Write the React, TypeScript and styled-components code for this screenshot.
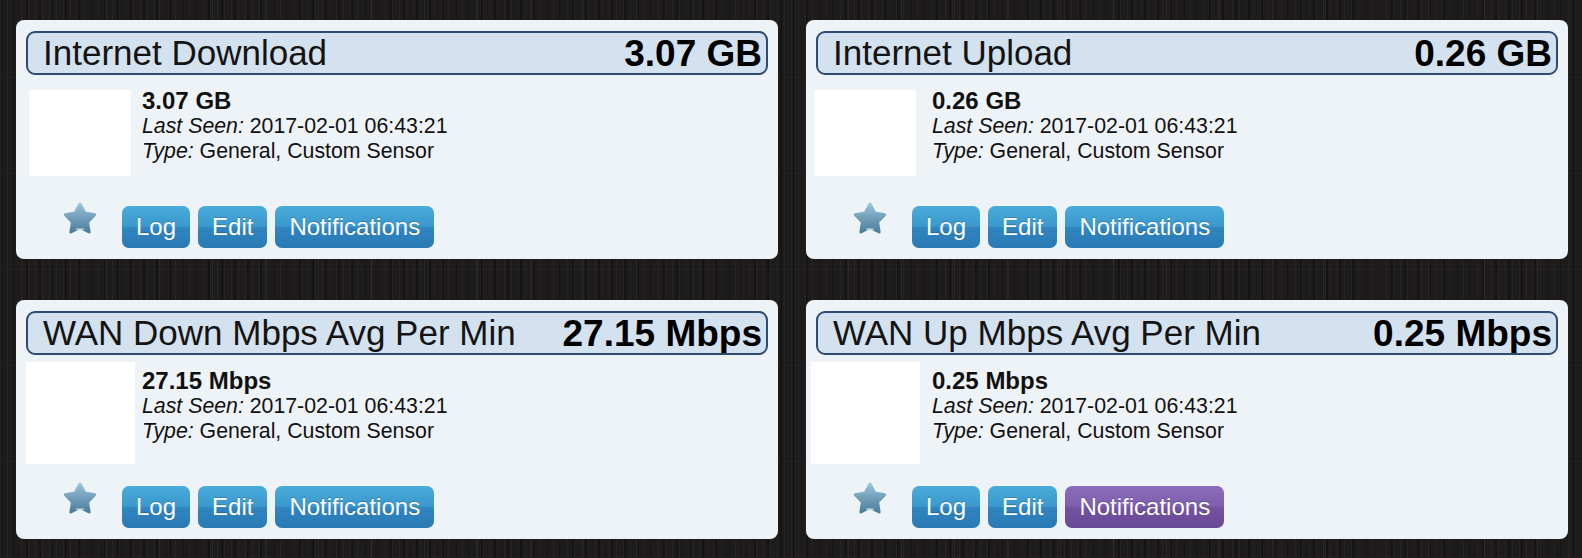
import React from "react";
import styled, { createGlobalStyle, css } from "styled-components";

const GlobalStyle = createGlobalStyle`
  html, body {
    margin: 0;
    padding: 0;
  }
  body {
    font-family: "Liberation Sans", Arial, Helvetica, sans-serif;
    background-color: #1d1b1c;
    background-image:
      repeating-linear-gradient(90deg, rgba(255,255,255,0.035) 0 1px, transparent 1px 7px),
      repeating-linear-gradient(90deg, rgba(0,0,0,0.28) 0 2px, transparent 2px 13px),
      repeating-linear-gradient(90deg, rgba(255,255,255,0.05) 0 1px, transparent 1px 53px),
      repeating-linear-gradient(0deg, rgba(255,255,255,0.025) 0 1px, transparent 1px 96px);
  }
`;

const Page = styled.div`
  display: grid;
  grid-template-columns: 762px 762px;
  column-gap: 28px;
  row-gap: 41px;
  padding: 20px 14px 19px 16px;
`;

const Card = styled.div`
  background: #eef3f8;
  border-radius: 8px;
  padding: 11px 10px 11px 10px;
  display: flex;
  flex-direction: column;
`;

const Header = styled.div`
  box-sizing: border-box;
  height: 44px;
  border: 2px solid #2c4d70;
  border-radius: 9px;
  background: #d4e2ef;
  display: flex;
  justify-content: space-between;
  align-items: flex-start;
  padding: 0 4px 0 15px;
  overflow: hidden;
`;

const Title = styled.div`
  font-size: 35px;
  line-height: 40px;
  color: #141414;
  white-space: nowrap;
`;

const HeaderValue = styled.div`
  font-size: 37px;
  line-height: 42px;
  font-weight: bold;
  color: #000;
  white-space: nowrap;
`;

const Body = styled.div`
  display: flex;
  margin-top: 7px;
  height: 102px;
`;

const ImageCol = styled.div`
  width: 108px;
  display: flex;
  align-items: center;
  justify-content: flex-start;
`;

const Placeholder = styled.div<{ $w: number; $h: number; $offset: number }>`
  background: #ffffff;
  width: ${(p) => p.$w}px;
  height: ${(p) => p.$h}px;
  margin-left: ${(p) => p.$offset}px;
  flex-shrink: 0;
`;

const Info = styled.div`
  margin-left: 8px;
  padding-top: 5px;
  color: #111;
`;

const ValueLine = styled.div`
  font-size: 24px;
  line-height: 27px;
  font-weight: bold;
`;

const MetaLine = styled.div`
  font-size: 21.3px;
  line-height: 25px;
  white-space: nowrap;
  em {
    font-style: italic;
  }
`;

const Footer = styled.div`
  display: flex;
  align-items: flex-start;
  margin-top: 22px;
  padding-left: 37px;
`;

const StarWrap = styled.div`
  width: 34px;
  height: 32px;
  margin-top: -4px;
  margin-right: 25px;
`;

const ButtonRow = styled.div`
  display: flex;
  gap: 8px;
`;

const blue = css`
  background: linear-gradient(180deg, #49acda 0%, #3b98cd 48%, #2f85c0 52%, #2a79b4 100%);
`;

const purple = css`
  background: linear-gradient(180deg, #8c6cba 0%, #7e5fae 48%, #72529f 52%, #6a4a98 100%);
`;

const Button = styled.button<{ $variant?: "blue" | "purple" }>`
  box-sizing: border-box;
  height: 42px;
  padding: 0 14px;
  border: none;
  border-radius: 7px;
  font-family: "Liberation Sans", Arial, Helvetica, sans-serif;
  font-size: 24px;
  line-height: 42px;
  color: #fff;
  text-shadow: 0 -1px 0 rgba(0, 0, 0, 0.2);
  cursor: pointer;
  ${(p) => (p.$variant === "purple" ? purple : blue)}
`;

const Star = () => (
  <svg width="34" height="32" viewBox="0 0 34 32">
    <defs>
      <linearGradient id="starGrad" x1="0" y1="0" x2="0" y2="1">
        <stop offset="0" stopColor="#9cc2d8" />
        <stop offset="0.45" stopColor="#74a2bd" />
        <stop offset="1" stopColor="#4f7f9b" />
      </linearGradient>
    </defs>
    <polygon
      points="17,2 21.7,11 31.7,12.7 24.6,20 26.1,30 17,25.5 7.9,30 9.4,20 2.3,12.7 12.3,11"
      fill="url(#starGrad)"
      stroke="url(#starGrad)"
      strokeWidth="3"
      strokeLinejoin="round"
    />
    <ellipse cx="17" cy="27.3" rx="4" ry="1" fill="#cfe2ee" opacity="0.8" />
  </svg>
);

type Sensor = {
  title: string;
  value: string;
  img: { w: number; h: number; offset: number };
  notifVariant: "blue" | "purple";
};

const sensors: Sensor[] = [
  { title: "Internet Download", value: "3.07 GB", img: { w: 102, h: 86, offset: 3 }, notifVariant: "blue" },
  { title: "Internet Upload", value: "0.26 GB", img: { w: 102, h: 86, offset: -2 }, notifVariant: "blue" },
  { title: "WAN Down Mbps Avg Per Min", value: "27.15 Mbps", img: { w: 109, h: 102, offset: 0 }, notifVariant: "blue" },
  { title: "WAN Up Mbps Avg Per Min", value: "0.25 Mbps", img: { w: 109, h: 102, offset: -5 }, notifVariant: "purple" },
];

const SensorCard = ({ s }: { s: Sensor }) => (
  <Card>
    <Header>
      <Title>{s.title}</Title>
      <HeaderValue>{s.value}</HeaderValue>
    </Header>
    <Body>
      <ImageCol>
        <Placeholder $w={s.img.w} $h={s.img.h} $offset={s.img.offset} />
      </ImageCol>
      <Info>
        <ValueLine>{s.value}</ValueLine>
        <MetaLine>
          <em>Last Seen:</em> 2017-02-01 06:43:21
        </MetaLine>
        <MetaLine>
          <em>Type:</em> General, Custom Sensor
        </MetaLine>
      </Info>
    </Body>
    <Footer>
      <StarWrap>
        <Star />
      </StarWrap>
      <ButtonRow>
        <Button>Log</Button>
        <Button>Edit</Button>
        <Button $variant={s.notifVariant}>Notifications</Button>
      </ButtonRow>
    </Footer>
  </Card>
);

export default function App() {
  return (
    <>
      <GlobalStyle />
      <Page>
        {sensors.map((s) => (
          <SensorCard key={s.title} s={s} />
        ))}
      </Page>
    </>
  );
}
